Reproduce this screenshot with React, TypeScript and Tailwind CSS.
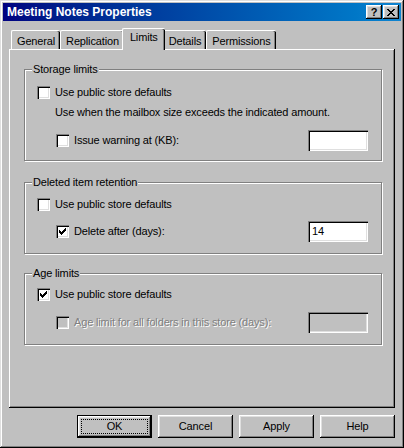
import React from "react";

const raised =
  "shadow-[inset_-1px_-1px_#000,inset_1px_1px_#fff,inset_-2px_-2px_#808080,inset_2px_2px_#dfdfdf]";
const sunken =
  "shadow-[inset_1px_1px_#808080,inset_2px_2px_#000,inset_-1px_-1px_#fff,inset_-2px_-2px_#dfdfdf]";

function Check({ checked, disabled }: { checked?: boolean; disabled?: boolean }) {
  return (
    <div
      className={`w-[13px] h-[13px] shrink-0 flex items-center justify-center ${sunken} ${
        disabled ? "bg-[#c0c0c0]" : "bg-white"
      }`}
    >
      {checked && (
        <svg width="7" height="7" viewBox="0 0 7 7">
          <path d="M0 2h1v1h1v1h1v-1h1v-1h1v-1h1v-1h1v3h-1v1h-1v1h-1v1h-1v1h-1v-1h-1v-1h-1v-1h-1z" fill="#000" />
        </svg>
      )}
    </div>
  );
}

function TextBox({ value, disabled }: { value?: string; disabled?: boolean }) {
  return (
    <div
      className={`w-[60px] h-[21px] ${sunken} ${disabled ? "bg-[#c0c0c0]" : "bg-white"} px-[4px] flex items-center`}
    >
      {value}
    </div>
  );
}

function Group({
  label,
  className,
  children,
}: {
  label: string;
  className?: string;
  children: React.ReactNode;
}) {
  return (
    <div
      className={`relative border border-[#808080] shadow-[inset_1px_1px_#fff,1px_1px_#fff] ${className ?? ""}`}
    >
      <div className="absolute left-[7px] top-[-7px] bg-[#c0c0c0] px-[1px] leading-[13px]">{label}</div>
      {children}
    </div>
  );
}

function Tab({ label, selected }: { label: string; selected?: boolean }) {
  if (selected) {
    return (
      <div className="relative z-10 -mx-[2px] mb-[-1px] h-[22px] px-[7px] pt-[2px] bg-[#c0c0c0] border-t border-l border-white rounded-tl-[2px] rounded-tr-[2px] shadow-[inset_-1px_0_#000,inset_-2px_0_#808080]">
        {label}
      </div>
    );
  }
  return (
    <div className="h-[19px] px-[5px] pt-[4px] bg-[#c0c0c0] border-t border-l border-white rounded-tl-[2px] rounded-tr-[2px] shadow-[inset_-1px_0_#000,inset_-2px_0_#808080]">
      {label}
    </div>
  );
}

function Button({ label, isDefault }: { label: string; isDefault?: boolean }) {
  if (isDefault) {
    return (
      <div className="w-[75px] h-[23px] border border-black">
        <div className={`w-full h-full ${raised} p-[3px]`}>
          <div className="w-full h-full border border-dotted border-black flex items-center justify-center">
            {label}
          </div>
        </div>
      </div>
    );
  }
  return <div className={`w-[75px] h-[23px] ${raised} flex items-center justify-center`}>{label}</div>;
}

export default function App() {
  return (
    <div
      className="w-[404px] h-[448px] bg-[#c0c0c0] p-[3px] flex flex-col text-[11px] leading-[13px] tracking-[-0.15px] text-black shadow-[inset_-1px_-1px_#000,inset_1px_1px_#dfdfdf,inset_-2px_-2px_#808080,inset_2px_2px_#fff]"
      style={{ fontFamily: '"Liberation Sans", Arial, sans-serif' }}
    >
      {/* title bar */}
      <div className="h-[18px] flex items-center pl-[4px] pr-[2px] bg-gradient-to-r from-[#000080] to-[#1084d0]">
        <div className="flex-1 text-white font-bold text-[12px] tracking-normal">Meeting Notes Properties</div>
        <div className={`w-[16px] h-[14px] bg-[#c0c0c0] ${raised} flex items-center justify-center font-bold text-[11px]`}>
          ?
        </div>
        <div className={`w-[16px] h-[14px] ml-[1px] bg-[#c0c0c0] ${raised} flex items-center justify-center`}>
          <svg width="8" height="7" viewBox="0 0 8 7">
            <path d="M0 0h2v1h1v1h2v-1h1v-1h2v1h-1v1h-1v1h-1v1h1v1h1v1h1v1h-2v-1h-1v-1h-2v1h-1v1h-2v-1h1v-1h1v-1h1v-1h-1v-1h-1v-1h-1z" fill="#000" />
          </svg>
        </div>
      </div>

      {/* body */}
      <div className="flex flex-col pl-[6px] pr-[6px] pt-[6px]">
        <div className="flex items-end pl-[2px] h-[22px]">
          <Tab label="General" />
          <Tab label="Replication" />
          <Tab label="Limits" selected />
          <Tab label="Details" />
          <Tab label="Permissions" />
        </div>

        <div className="h-[359px] flex flex-col pl-[15px] pr-[13px] pt-[20px] shadow-[inset_-1px_-1px_#000,inset_1px_1px_#fff,inset_-2px_-2px_#808080]">
          <Group label="Storage limits" className="pl-[12px] pr-[13px] pt-[16px] pb-[9px]">
            <div className="flex items-center gap-[5px] h-[13px]">
              <Check />
              <span>Use public store defaults</span>
            </div>
            <div className="pl-[18px] mt-[7px] h-[13px]">Use when the mailbox size exceeds the indicated amount.</div>
            <div className="flex items-center mt-[11px] h-[21px] pl-[19px]">
              <Check />
              <span className="ml-[5px] flex-1">Issue warning at (KB):</span>
              <TextBox />
            </div>
          </Group>

          <Group label="Deleted item retention" className="mt-[21px] pl-[12px] pr-[13px] pt-[15px] pb-[11px]">
            <div className="flex items-center gap-[5px] h-[13px]">
              <Check />
              <span>Use public store defaults</span>
            </div>
            <div className="flex items-center mt-[10px] h-[21px] pl-[19px]">
              <Check checked />
              <span className="ml-[5px] flex-1">Delete after (days):</span>
              <TextBox value="14" />
            </div>
          </Group>

          <Group label="Age limits" className="mt-[19px] pl-[12px] pr-[13px] pt-[14px] pb-[11px]">
            <div className="flex items-center gap-[5px] h-[13px]">
              <Check checked />
              <span>Use public store defaults</span>
            </div>
            <div className="flex items-center mt-[11px] h-[21px] pl-[19px]">
              <Check disabled />
              <span className="ml-[5px] flex-1 text-[#808080] [text-shadow:1px_1px_0_#fff]">
                Age limit for all folders in this store (days):
              </span>
              <TextBox disabled />
            </div>
          </Group>
        </div>

        <div className="flex justify-end gap-[6px] mt-[7px]">
          <Button label="OK" isDefault />
          <Button label="Cancel" />
          <Button label="Apply" />
          <Button label="Help" />
        </div>
      </div>
    </div>
  );
}
